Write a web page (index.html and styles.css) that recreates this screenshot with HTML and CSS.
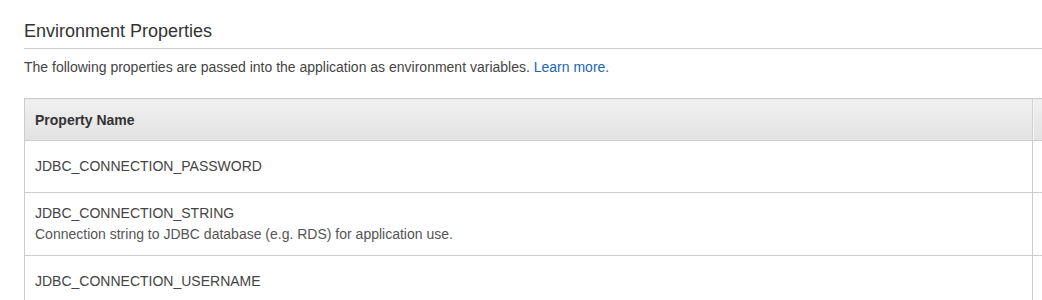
FILE: index.html
```html
<!DOCTYPE html>
<html lang="en">
<head>
    <meta charset="UTF-8">
    <title>Environment Properties</title>
    <link rel="stylesheet" href="styles.css">
</head>
<body>
    <div class="section">
        <h2 class="section-title">Environment Properties</h2>
        <p class="section-desc">The following properties are passed into the application as environment variables. <a href="#">Learn more.</a></p>
        <div class="table-wrap">
            <table class="props-table">
                <thead>
                    <tr>
                        <th class="col-name">Property Name</th>
                        <th class="col-value"></th>
                    </tr>
                </thead>
                <tbody>
                    <tr class="row-short">
                        <td>JDBC_CONNECTION_PASSWORD</td>
                        <td></td>
                    </tr>
                    <tr>
                        <td>
                            JDBC_CONNECTION_STRING
                            <div class="prop-help">Connection string to JDBC database (e.g. RDS) for application use.</div>
                        </td>
                        <td></td>
                    </tr>
                    <tr class="row-short">
                        <td>JDBC_CONNECTION_USERNAME</td>
                        <td></td>
                    </tr>
                </tbody>
            </table>
        </div>
    </div>
</body>
</html>
```

FILE: styles.css
```css
body {
    margin: 0;
    padding: 0;
    background-color: #fff;
    font-family: 'Liberation Sans', Arial, sans-serif;
    color: #444;
    overflow: hidden;
}

.section {
    padding: 0 0 0 24px;
}

.section-title {
    font-size: 18px;
    font-weight: normal;
    color: #333;
    margin: 0;
    padding: 21px 0 7px;
    line-height: 20px;
    border-bottom: 1px solid #ccc;
}

.section-desc {
    font-size: 14px;
    line-height: 18px;
    margin: 9px 0 0;
    color: #444;
}

.section-desc a {
    color: #2066b0;
    text-decoration: none;
}

.table-wrap {
    margin-top: 22px;
    overflow: hidden;
}

.props-table {
    width: 1100px;
    border-collapse: collapse;
    font-size: 14px;
}

.props-table th {
    text-align: left;
    font-weight: bold;
    font-size: 14px;
    color: #333;
    height: 41px;
    padding: 0 10px;
    background: linear-gradient(#f0f0f0, #e2e2e2);
    border: 1px solid #ccc;
}

.props-table th.col-name {
    width: 987px;
    border-right: 1px solid #d0d0d0;
}

.props-table th.col-value {
    box-shadow: inset 1px 0 0 #f6f6f6;
}

.props-table td {
    border: 1px solid #ccc;
    padding: 10px;
    line-height: 21px;
    vertical-align: middle;
    color: #444;
}

.props-table tr.row-short td {
    padding: 15px 10px;
}

.prop-help {
    color: #555;
}
```
